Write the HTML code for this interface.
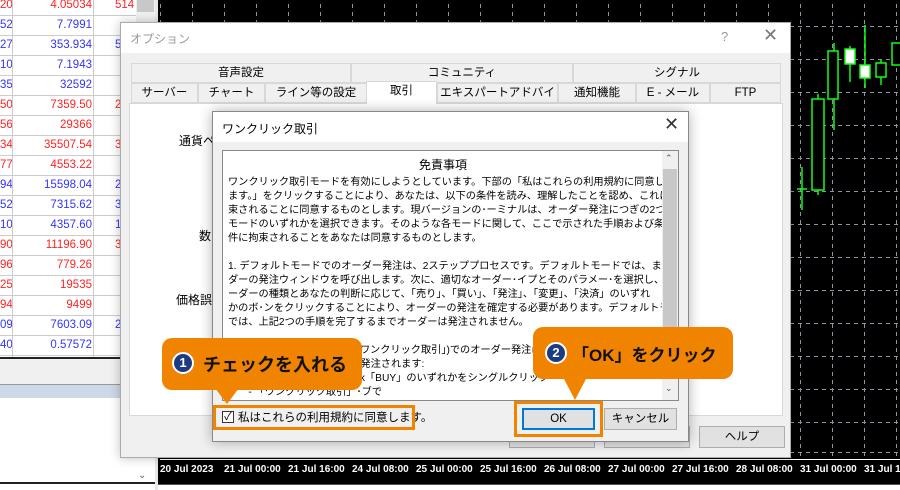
<!DOCTYPE html>
<html><head><meta charset="utf-8"><style>
*{margin:0;padding:0;box-sizing:border-box}
body{width:900px;height:490px;overflow:hidden;position:relative;background:#fff;font-family:"Liberation Sans","Noto Sans CJK JP",sans-serif;font-size:12px;color:#000}
.abs{position:absolute}
.tbl div.r{position:absolute;left:0;width:136px;height:20px;border-bottom:1px solid #ccc}
.tbl span{position:absolute;top:3px;font-size:11.5px}
.red{color:#f22}.blue{color:#33f}
.chart{left:158px;top:0;width:742px;height:484px;background:#000;
background-image:repeating-linear-gradient(0deg,#000 0 4px,transparent 4px 8px),repeating-linear-gradient(90deg,transparent 0 2px,#8a96a8 2px 3px,transparent 3px 32px)}
.hg{left:158px;width:742px;height:1px;background:repeating-linear-gradient(90deg,#8a96a8 0 4px,transparent 4px 8px)}
.tab{position:absolute;height:20px;border:1px solid #d8d8d8;background:#f0f0f0;text-align:center;line-height:19px;font-size:11.5px}
.btn{position:absolute;height:22px;background:#e1e1e1;border:1px solid #adadad;text-align:center;line-height:20px;font-size:11.5px}
.txt div{height:14px;line-height:14px;white-space:nowrap;font-size:10.2px}
.call{position:absolute;background:#f08300;border-radius:10px}
.num{position:absolute;width:22px;height:22px;border-radius:50%;background:#1d3b82;border:2px solid #fff;color:#fff;font-size:13px;text-align:center;line-height:18px;font-weight:bold}
</style></head><body>
<div class="abs tbl" style="left:0;top:0;width:156px;height:357px;background:#fff">
<div class="r" style="top:-4px"><span class="red" style="left:0">20</span><span class="red" style="right:44px">4.05034</span><span class="red" style="left:115px">514</span></div>
<div class="r" style="top:16px"><span class="blue">52</span><span class="blue" style="right:44px">7.7991</span></div>
<div class="r" style="top:36px"><span class="blue">27</span><span class="blue" style="right:44px">353.934</span><span class="blue" style="left:115px">5</span></div>
<div class="r" style="top:56px"><span class="blue">10</span><span class="blue" style="right:44px">7.1943</span></div>
<div class="r" style="top:76px"><span class="blue">35</span><span class="blue" style="right:44px">32592</span></div>
<div class="r" style="top:96px"><span class="red">50</span><span class="red" style="right:44px">7359.50</span><span class="red" style="left:115px">2</span></div>
<div class="r" style="top:116px"><span class="red">56</span><span class="red" style="right:44px">29366</span></div>
<div class="r" style="top:136px"><span class="red">34</span><span class="red" style="right:44px">35507.54</span><span class="red" style="left:115px">3</span></div>
<div class="r" style="top:156px"><span class="red">77</span><span class="red" style="right:44px">4553.22</span></div>
<div class="r" style="top:176px"><span class="blue">94</span><span class="blue" style="right:44px">15598.04</span><span class="blue" style="left:115px">2</span></div>
<div class="r" style="top:196px"><span class="blue">52</span><span class="blue" style="right:44px">7315.62</span><span class="blue" style="left:115px">3</span></div>
<div class="r" style="top:216px"><span class="blue">10</span><span class="blue" style="right:44px">4357.60</span><span class="blue" style="left:115px">1</span></div>
<div class="r" style="top:236px"><span class="red">90</span><span class="red" style="right:44px">11196.90</span><span class="red" style="left:115px">3</span></div>
<div class="r" style="top:256px"><span class="red">96</span><span class="red" style="right:44px">779.26</span></div>
<div class="r" style="top:276px"><span class="red">25</span><span class="red" style="right:44px">19535</span></div>
<div class="r" style="top:296px"><span class="red">94</span><span class="red" style="right:44px">9499</span></div>
<div class="r" style="top:316px"><span class="blue">09</span><span class="blue" style="right:44px">7603.09</span><span class="blue" style="left:115px">2</span></div>
<div class="r" style="top:336px"><span class="blue">40</span><span class="blue" style="right:44px">0.57572</span></div>
<div class="abs" style="left:12px;top:0;width:1px;height:357px;background:#ccc"></div>
<div class="abs" style="left:93px;top:0;width:1px;height:357px;background:#ccc"></div>
<div class="abs" style="left:136px;top:0;width:20px;height:357px;background:#f0f0f0"></div>
<div class="abs" style="left:137px;top:0;width:17px;height:12px;background:#c8c8c8"></div>
</div>
<div class="abs" style="left:0;top:357px;width:156px;height:2px;background:#222"></div>
<div class="abs" style="left:0;top:359px;width:156px;height:25px;background:#f0f0f0"></div>
<div class="abs" style="left:0;top:384px;width:156px;height:1px;background:#999"></div>
<div class="abs" style="left:0;top:385px;width:156px;height:13px;background:#cdd9e8"></div>
<div class="abs" style="left:138px;top:470px;font-size:10px;color:#666">⌄</div>
<div class="abs" style="left:0;top:482px;width:156px;height:2px;background:#222"></div>
<div class="abs" style="left:155px;top:0;width:3px;height:490px;background:#e8e8e8"></div>
<div class="abs chart"></div>
<div class="abs hg" style="top:26px"></div><div class="abs hg" style="top:59px"></div><div class="abs hg" style="top:92px"></div><div class="abs hg" style="top:125px"></div><div class="abs hg" style="top:158px"></div><div class="abs hg" style="top:191px"></div><div class="abs hg" style="top:224px"></div><div class="abs hg" style="top:257px"></div><div class="abs hg" style="top:290px"></div><div class="abs hg" style="top:323px"></div><div class="abs hg" style="top:356px"></div><div class="abs hg" style="top:389px"></div><div class="abs hg" style="top:422px"></div><div class="abs hg" style="top:452px"></div>
<div class="abs" style="left:158px;top:456px;width:742px;height:30px;background:#000"></div>
<div class="abs" style="left:160px;top:459px;width:740px;height:1px;background:#fff"></div>
<div class="abs" style="left:160px;top:464px;width:740px;font-size:10px;color:#fff;font-weight:bold;white-space:nowrap">
<span class="abs" style="left:0">20 Jul 2023</span><span class="abs" style="left:64px">21 Jul 00:00</span><span class="abs" style="left:128px">21 Jul 16:00</span><span class="abs" style="left:192px">24 Jul 08:00</span><span class="abs" style="left:256px">25 Jul 00:00</span><span class="abs" style="left:320px">25 Jul 16:00</span><span class="abs" style="left:384px">26 Jul 08:00</span><span class="abs" style="left:448px">27 Jul 00:00</span><span class="abs" style="left:512px">27 Jul 16:00</span><span class="abs" style="left:576px">28 Jul 08:00</span><span class="abs" style="left:640px">31 Jul 00:00</span><span class="abs" style="left:704px">31 Jul 16:00</span></div>
<div class="abs" style="left:158px;top:484px;width:742px;height:6px;background:#fff;border-top:1px solid #555"></div>
<svg class="abs" style="left:790px;top:20px" width="110" height="200">
<g stroke="#1f1" stroke-width="1.5" fill="none">
<line x1="12" y1="147" x2="12" y2="190"/><line x1="7" y1="169" x2="17" y2="169"/>
<line x1="28" y1="74" x2="28" y2="175"/><rect x="22" y="79" width="12" height="91" fill="#000"/>
<line x1="44" y1="23" x2="44" y2="110"/><rect x="38" y="31" width="10" height="48" fill="#000"/>
<line x1="60" y1="26" x2="60" y2="62"/><rect x="55" y="29" width="10" height="15" fill="#fff"/>
<line x1="75" y1="5" x2="75" y2="68"/><rect x="70" y="45" width="10" height="13" fill="#fff"/>
<line x1="91" y1="40" x2="91" y2="65"/><rect x="86" y="43" width="10" height="14" fill="#000"/>
<rect x="102" y="23" width="10" height="22" fill="#000"/>
</g></svg>
<div class="abs" style="left:120px;top:22px;width:671px;height:436px;background:#f0f0f0;border:1px solid #aaa;box-shadow:0 0 10px rgba(0,0,0,.25)">
<div class="abs" style="left:0;top:0;width:669px;height:30px;background:#fff"></div>
<div class="abs" style="left:9px;top:7px;color:#999;font-size:12px">オプション</div>
<div class="abs" style="left:600px;top:6px;color:#999;font-size:13px">?</div>
<div class="abs" style="left:642px;top:2px;color:#777;font-size:18px">✕</div>
<div class="tab" style="left:10px;top:40px;width:220px">音声設定</div>
<div class="tab" style="left:230px;top:40px;width:222px">コミュニティ</div>
<div class="tab" style="left:452px;top:40px;width:208px">シグナル</div>
<div class="tab" style="left:10px;top:60px;width:67px">サーバー</div>
<div class="tab" style="left:77px;top:60px;width:67px">チャート</div>
<div class="tab" style="left:144px;top:60px;width:102px">ライン等の設定</div>
<div class="tab" style="left:316px;top:60px;width:121px">エキスパートアドバイザ</div>
<div class="tab" style="left:437px;top:60px;width:78px">通知機能</div>
<div class="tab" style="left:515px;top:60px;width:74px">E - メール</div>
<div class="tab" style="left:589px;top:60px;width:71px">FTP</div>
<div class="abs" style="left:8px;top:80px;width:654px;height:313px;background:#fff;border:1px solid #d8d8d8"></div>
<div class="tab" style="left:245px;top:58px;width:71px;height:23px;background:#fff;border-bottom:none">取引</div>
<div class="abs" style="left:58px;top:109px;font-size:12px">通貨ペ</div>
<div class="abs" style="left:78px;top:204px;font-size:12px">数</div>
<div class="abs" style="left:55px;top:268px;font-size:12px">価格誤</div>
<div class="btn" style="left:388px;top:403px;width:86px"></div>
<div class="btn" style="left:483px;top:403px;width:86px"></div>
<div class="btn" style="left:578px;top:403px;width:86px">ヘルプ</div>
</div>
<div class="abs" style="left:212px;top:111px;width:477px;height:331px;background:#f0f0f0;border:1px solid #888;box-shadow:0 0 12px rgba(0,0,0,.3)">
<div class="abs" style="left:0;top:0;width:475px;height:30px;background:#fff"></div>
<div class="abs" style="left:9px;top:8px;font-size:12px">ワンクリック取引</div>
<div class="abs" style="left:451px;top:2px;font-size:18px;color:#333">✕</div>
<div class="abs" style="left:9px;top:38px;width:457px;height:251px;background:#fff;border:1px solid #888;overflow:hidden">
<div class="abs" style="left:0;width:440px;top:5px;text-align:center;font-size:12px">免責事項</div>
<div class="abs txt" style="left:5px;top:25px;width:434px;overflow:hidden">
<div>ワンクリック取引モードを有効にしようとしています。下部の「私はこれらの利用規約に同意し</div>
<div>ます。」をクリックすることにより、あなたは、以下の条件を読み、理解したことを認め、これに拘</div>
<div>束されることに同意するものとします。現バージョンの･ーミナルは、オーダー発注につぎの2つの</div>
<div>モードのいずれかを選択できます。そのような各モードに関して、ここで示された手順および条</div>
<div>件に拘束されることをあなたは同意するものとします。</div>
<div></div>
<div>1. デフォルトモードでのオーダー発注は、2ステッププロセスです。デフォルトモードでは、まずオー</div>
<div>ダーの発注ウィンドウを呼び出します。次に、適切なオーダー･イプとそのパラメー･を選択し、オ</div>
<div>ーダーの種類とあなたの判断に応じて、「売り」、「買い」、「発注」、「変更」、「決済」のいずれ</div>
<div>かのボ･ンをクリックすることにより、オーダーの発注を確定する必要があります。デフォルトモード</div>
<div>では、上記2つの手順を完了するまでオーダーは発注されません。</div>
<div></div>
<div>2. ワンクリック取引モード(「ワンクリック取引」)でのオーダー発注は以下の</div>
<div>　　オーダーは以下の場合に発注されます:</div>
<div>　　- Bid「SELL」または Ask「BUY」のいずれかをシングルクリック</div>
<div>　　- 「ワンクリック取引」･ブで</div>
<div>　　- チャート上の「ワンクリック取引」パネル」で</div>
</div>
<div class="abs" style="left:439px;top:0;width:16px;height:249px;background:#f0f0f0"></div>
<div class="abs" style="left:440px;top:18px;width:14px;height:192px;background:#c8c8c8"></div>
<div class="abs" style="left:442px;top:2px;font-size:9px;color:#555">⌃</div>
<div class="abs" style="left:442px;top:232px;font-size:9px;color:#555">⌄</div>
</div>
<div class="abs" style="left:9px;top:299px;width:12px;height:12px;border:1px solid #333;background:#fff;font-size:11px;line-height:10px;text-align:center">✓</div>
<div class="abs" style="left:25px;top:297px;font-size:11.5px">私はこれらの利用規約に同意します。</div>
<div class="btn" style="left:309px;top:296px;width:73px;border:2px solid #0078d7;line-height:18px">OK</div>
<div class="btn" style="left:391px;top:296px;width:73px">キャンセル</div>
</div>
<div class="abs" style="left:213px;top:405px;width:202px;height:25px;border:3px solid #f08300"></div>
<div class="abs" style="left:514px;top:401px;width:89px;height:36px;border:3px solid #f08300"></div>
<div class="call" style="left:162px;top:338px;width:200px;height:52px"></div>
<svg class="abs" style="left:215px;top:388px" width="30" height="18"><polygon points="0,0 24,0 12,16" fill="#f08300"/></svg>
<div class="num" style="left:172px;top:352px">1</div>
<div class="abs" style="left:203px;top:351px;font-size:18px;font-weight:bold;color:#111;white-space:nowrap">チェックを入れる</div>
<div class="call" style="left:533px;top:327px;width:200px;height:52px"></div>
<svg class="abs" style="left:563px;top:377px" width="30" height="24"><polygon points="0,0 24,0 12,23" fill="#f08300"/></svg>
<div class="num" style="left:545px;top:342px">2</div>
<div class="abs" style="left:572px;top:341px;font-size:17px;font-weight:bold;color:#111;white-space:nowrap">「OK」をクリック</div>
</body></html>
